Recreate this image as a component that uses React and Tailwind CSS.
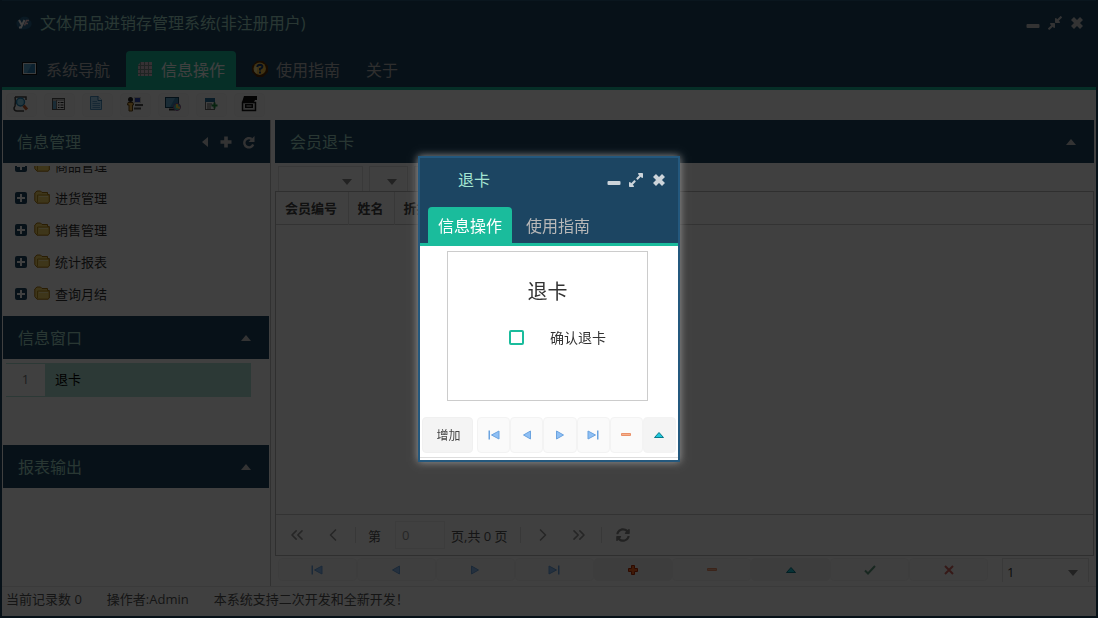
import React from "react";
import { ChevronLeft, ChevronRight, ChevronsLeft, ChevronsRight } from "lucide-react";
import { FaSyncAlt, FaExpandAlt, FaCompressAlt } from "react-icons/fa";

const CloseIcon = () => (
  <svg viewBox="0 0 12 12" className="size-3">
    <path d="M1.5 1.5 L10.5 10.500 M10.500 1.500 L1.500 10.500" stroke="currentColor" strokeWidth="4.2" />
  </svg>
);

const MinusIcon = () => (
  <svg viewBox="0 0 14 12" className="h-3 w-3.5">
    <rect x="0.5" y="7" width="13" height="4" rx="1" fill="currentColor" />
  </svg>
);

const PlusIcon = () => (
  <svg viewBox="0 0 12 12" className="size-3">
    <path d="M4.200 .5 H7.800 V4.200 H11.500 V7.800 H7.800 V11.500 H4.200 V7.800 H.5 V4.200 H4.200Z" fill="currentColor" />
  </svg>
);

const UpIcon = () => (
  <svg viewBox="0 0 10 6" className="h-1.5 w-2.5">
    <path d="M5 0 L10 6 H0Z" fill="currentColor" />
  </svg>
);

const DownIcon = () => (
  <svg viewBox="0 0 10 6" className="h-1.5 w-2.5">
    <path d="M0 0 H10 L5 6Z" fill="currentColor" />
  </svg>
);

const LeftIcon = () => (
  <svg viewBox="0 0 6 10" className="h-2.5 w-1.5">
    <path d="M6 0 V10 L0 5Z" fill="currentColor" />
  </svg>
);

const ReloadIcon = () => (
  <svg viewBox="0 0 14 14" className="size-3.5">
    <path d="M11.200 9.500 A4.600 4.600 0 1 1 9.600 4" fill="none" stroke="currentColor" strokeWidth="2.400" />
    <path d="M12.500 1 V7 H6.500Z" fill="currentColor" />
  </svg>
);

function NavGlyph({ kind }) {
  const edge = "#6ba3df";
  return (
    <svg viewBox="0 0 16 16" className="size-4">
      {kind === "first" && (
        <g>
          <path d="M13 4 V12 L5.5 8Z" fill="#8fc0f5" stroke={edge} />
          <rect x="2.5" y="3.5" width="1.500" height="9" fill={edge} />
        </g>
      )}
      {kind === "prev" && <path d="M11.5 4 V12 L4.5 8Z" fill="#8fc0f5" stroke={edge} />}
      {kind === "next" && <path d="M4.5 4 V12 L11.5 8Z" fill="#8fc0f5" stroke={edge} />}
      {kind === "last" && (
        <g>
          <path d="M3 4 V12 L10.5 8Z" fill="#8fc0f5" stroke={edge} />
          <rect x="12" y="3.5" width="1.500" height="9" fill={edge} />
        </g>
      )}
      {kind === "add" && <path d="M6.500 3.500 H9.500 V6.500 H12.500 V9.500 H9.500 V12.500 H6.500 V9.500 H3.500 V6.500 H6.500Z" fill="#ff6a1f" stroke="#b82a00" />}
      {kind === "remove" && <path d="M3.500 6.500 H12.500 V8.500 H3.500Z" fill="#f5b08c" stroke="#ea9068" />}
      {kind === "edit" && <path d="M8 5.500 L12.500 10.500 H3.500Z" fill="#1fc8dc" stroke="#087b8b" />}
      {kind === "ok" && <path d="M3 8.500 L6 11.500 L13 4" fill="none" stroke="#5f9c80" strokeWidth="2" />}
      {kind === "cancel" && <path d="M4 4 L12 12 M12 4 L4 12" stroke="#d3645c" strokeWidth="2" />}
    </svg>
  );
}

const Folder = () => (
  <svg viewBox="0 0 16 14" className="h-3.5 w-4">
    <path d="M.8 10.500 V3 L3 1 H6.500 L8 2.500 H13.500 V4.500 H15.300 V12 L14 13.200 H3Z" fill="#f8d768" stroke="#a8740c" />
    <path d="M3.500 12.500 V5 H15" fill="none" stroke="#b98f22" />
    <path d="M5 6.500 H14" stroke="#fff0a8" />
  </svg>
);

const Expander = () => (
  <svg viewBox="0 0 12 12" className="size-3">
    <rect width="12" height="12" rx="2" fill="#1c4562" />
    <path d="M6 2 V10 M2 6 H10" stroke="#fff" strokeWidth="2" />
  </svg>
);

const Logo = () => (
  <svg viewBox="0 0 16 14" className="h-3.5 w-4">
    <path d="M.5 8 Q0 4 4 3.500 Q5 0 9 .8 Q13 1 13.300 4 Q16 5 15.500 9 Q14 13 9 13.200 H5 Q1 12 .5 8Z" fill="#28658c" />
    <path d="M3 4 L5.500 8.500 M8.500 4 L5 11.500 H3" fill="none" stroke="#fff" strokeWidth="2" />
    <path d="M8.500 9.500 L10.500 4.500 H13 M9.500 7.500 H12" fill="none" stroke="#f2c7cc" strokeWidth="1.500" />
  </svg>
);

function TabIcon({ kind }) {
  return (
    <svg viewBox="0 0 16 16" className="size-4">
      {kind === "nav" && (
        <g>
          <rect x="0" y="1" width="15" height="13" fill="#111" />
          <rect x="1" y="2" width="13" height="11" fill="#eef6fa" />
          <rect x="2" y="3" width="11" height="9" fill="#2f83bd" />
          <path d="M2 3 H10 L5 12 H2Z" fill="#5aa6d3" />
        </g>
      )}
      {kind === "grid" && (
        <g>
          <path d="M4 1 H15 V15 H1 V4Z" fill="#d8c4cf" />
          <path d="M1 4.500 H15 M1 8.500 H15 M1 12.500 H15 M3.500 1 V15 M7.500 1 V15 M11.500 1 V15" stroke="#7d8f8b" />
        </g>
      )}
      {kind === "help" && (
        <g>
          <path d="M5 0 H11 L16 5 V11 L11 16 H5 L0 11 V5Z" fill="#5a2f06" />
          <circle cx="7.700" cy="7.700" r="6.200" fill="#ffcb4a" />
          <path d="M2 10 Q2 3 9 2 Q4 6 5 13Z" fill="#ffe999" />
          <path d="M5.200 6 Q5.500 3.800 8 3.800 Q10.800 4 10.300 6 Q10 7.300 8 8 V9.500" fill="none" stroke="#173c72" strokeWidth="2" />
          <rect x="7" y="10.500" width="2" height="2" fill="#173c72" />
        </g>
      )}
    </svg>
  );
}

function ToolIcon({ kind }) {
  return (
    <svg viewBox="0 0 16 16" className="size-4">
      {kind === "search" && (
        <g>
          <path d="M2 1 H13 V4 M2 1 Q3 5 2 10 L1 12 Q1 15 4 15 H11" fill="none" stroke="#444" strokeWidth="1.500" />
          <circle cx="7.500" cy="6" r="4" fill="#8fdcf7" stroke="#2383b7" strokeWidth="1.500" />
          <path d="M10.500 9.500 L14 13.500" stroke="#c65b2e" strokeWidth="3" />
        </g>
      )}
      {kind === "list" && (
        <g>
          <rect x="1.500" y="2.500" width="12" height="11" fill="#fff" stroke="#555" />
          <rect x="2" y="5" width="3" height="8" fill="#69b1d8" />
          <path d="M2 4 H14 M5.500 4 V13" stroke="#777" />
          <path d="M7 6.500 H8.500 M9.500 6.500 H12.500 M7 9 H8.500 M9.500 9 H12.500 M7 11.500 H8.500 M9.500 11.500 H12.500" stroke="#222" />
        </g>
      )}
      {kind === "doc" && (
        <g>
          <path d="M1.500 .5 H9 L12.500 4 V13.500 H1.500Z" fill="#a9dafa" stroke="#4c93c2" />
          <path d="M9 0 V4.500 H13" fill="#dff4ff" stroke="#2f78ab" />
          <path d="M3.500 5.500 H8 M3.500 7.500 H11 M3.500 9.500 H11 M3.500 11.500 H11" stroke="#5ba0cd" />
        </g>
      )}
      {kind === "user" && (
        <g>
          <rect x="7.500" y="1.500" width="6" height="5" fill="#3048b8" stroke="#ccc" />
          <path d="M8 9 H16 M7 12.500 H14" stroke="#555" strokeWidth="2" />
          <path d="M8 10.500 H16" stroke="#eee" />
          <circle cx="3.500" cy="3.500" r="2.500" fill="#222" />
          <path d="M1 6.500 H6 L6.500 9 H5.500 V15 H2 V9 H.5Z" fill="#f1b950" stroke="#5f4210" />
        </g>
      )}
      {kind === "screen" && (
        <g>
          <rect x=".5" y="1.500" width="13" height="10" fill="#3d88b5" stroke="#13405d" />
          <path d="M1 2 H10 L5 11 H1Z" fill="#66add3" />
          <path d="M4 13.500 H10" stroke="#333" strokeWidth="2" />
          <circle cx="12" cy="11" r="3.500" fill="#48c7b0" stroke="#8c488e" />
          <path d="M12 8 V11 L15 12" fill="none" stroke="#ffd647" strokeWidth="2" />
        </g>
      )}
      {kind === "insert" && (
        <g>
          <rect x="2.500" y="2.500" width="9" height="11" fill="#fff" stroke="#666" />
          <rect x="2" y="2" width="10" height="4" fill="#2b6f9d" />
          <path d="M4 8 H9 M4 10 H8 M4 12 H8" stroke="#555" />
          <path d="M11.500 6.500 V12.500 M8.500 9.500 H14.500" stroke="#1c8a3c" strokeWidth="2" />
        </g>
      )}
      {kind === "print" && (
        <g>
          <path d="M3 0 H16 V4 H14 L13 6 H1Z" fill="#111" />
          <path d="M1.500 6.500 H14.500 V14.500 H1.500Z" fill="#ddd" stroke="#111" strokeWidth="1.500" />
          <rect x="4" y="8" width="8" height="4" fill="#111" />
          <path d="M5.500 10 H10.500" stroke="#ddd" />
        </g>
      )}
    </svg>
  );
}

const toolbar = [
  ["search", "查询"],
  ["list", "列表"],
  ["doc", "文档"],
  ["user", "用户"],
  ["screen", "屏幕"],
  ["insert", "插入"],
  ["print", "打印"],
];

const treeItems = ["商品管理", "进货管理", "销售管理", "统计报表", "查询月结"];

const gridButtons = [
  ["first", "首条"],
  ["prev", "上一条"],
  ["next", "下一条"],
  ["last", "末条"],
  ["add", "新增"],
  ["remove", "删除"],
  ["edit", "编辑"],
  ["ok", "保存"],
  ["cancel", "取消"],
];

const dialogButtons = gridButtons.slice(0, 4).concat([gridButtons[5], gridButtons[6]]);

function Tab({ icon, active, children }) {
  return (
    <button
      className={
        "flex h-9 items-center gap-2 rounded-t text-base " +
        (icon ? "px-[11px] " : "px-2.5 ") +
        (active ? "bg-[#1abc9c] text-white" : "text-[#b8b8b8]")
      }
    >
      {icon && <TabIcon kind={icon} />}
      <span className="pt-0.5">{children}</span>
    </button>
  );
}

function PanelHeader({ title, children }) {
  return (
    <header className="flex h-[43px] shrink-0 items-center justify-between bg-[#1c4562] pr-[18px] pl-[15px] text-base text-[#a3dccb]">
      <h2>{title}</h2>
      <div className="flex items-center gap-3 text-[#ccc]">{children}</div>
    </header>
  );
}

function Combo({ label, value, className }) {
  return (
    <div className={"relative border-x border-t border-[#e2e2e2] " + className}>
      <select aria-label={label} className="h-full w-full appearance-none bg-transparent px-1 text-[13px] text-[#333] outline-none">
        <option>{value}</option>
      </select>
      <span className="pointer-events-none absolute right-2.5 bottom-1.5 text-[#888]">
        <DownIcon />
      </span>
    </div>
  );
}

const Separator = () => <span className="h-4 w-px bg-[#ddd]" />;

function Sidebar() {
  return (
    <aside className="flex w-[268px] shrink-0 flex-col border-r border-[#c4c4c4]">
      <header className="flex h-[43px] shrink-0 items-center justify-between bg-[#1c4562] px-3.5 text-base text-[#a3dccb]">
        <h2>信息管理</h2>
        <div className="flex items-center gap-2.5 text-[#ccc]">
          <button aria-label="收起" className="pr-0.5"><LeftIcon /></button>
          <button aria-label="添加"><PlusIcon /></button>
          <button aria-label="刷新"><ReloadIcon /></button>
        </div>
      </header>
      <div className="mt-[3px] flex h-[150px] shrink-0 flex-col justify-end overflow-hidden pb-1.5">
        <ul>
          {treeItems.map((name) => (
            <li key={name} className="flex h-8 items-center px-3 text-[13px] text-[#333]">
              <button aria-label={"展开" + name}><Expander /></button>
              <span className="mr-[5px] ml-[7px] pb-0.5"><Folder /></span>
              <span className="pt-0.5">{name}</span>
            </li>
          ))}
        </ul>
      </div>
      <div className="flex flex-1 flex-col pr-px">
        <PanelHeader title="信息窗口">
          <button aria-label="收起信息窗口"><UpIcon /></button>
        </PanelHeader>
        <div className="h-[86px] pt-1 pr-[18px] pl-[3px]">
          <table className="w-full text-left text-[13px]">
            <tbody>
              <tr className="h-[33px] border-y border-[#b0e3d6]">
                <td className="w-[39px] text-center text-[#777]">1</td>
                <td className="bg-[#b0e3d6] px-2.5 text-black">退卡</td>
              </tr>
            </tbody>
          </table>
        </div>
        <PanelHeader title="报表输出">
          <button aria-label="收起报表输出"><UpIcon /></button>
        </PanelHeader>
      </div>
    </aside>
  );
}

function MemberPanel() {
  return (
    <section className="flex min-w-0 flex-1 flex-col">
      <PanelHeader title="会员退卡">
        <button aria-label="收起会员退卡"><UpIcon /></button>
      </PanelHeader>
      <div className="flex h-7 gap-1.5 px-[3px] pt-[3px]">
        <Combo label="字段" value="" className="w-[85px]" />
        <Combo label="条件" value="" className="w-[39px]" />
        <Combo label="内容" value="" className="w-[85px]" />
      </div>
      <div className="flex flex-1 flex-col border border-[#bbb]">
        <table className="w-full text-left text-[13px] text-[#444]">
          <thead>
            <tr className="h-8 border-b border-[#ccc]">
              <th className="w-[72px] border-r border-[#ddd] pt-0.5 pl-[9px]">会员编号</th>
              <th className="w-[46px] border-r border-[#ddd] pt-0.5 pl-[9px]">姓名</th>
              <th className="pt-0.5 pl-[9px]">折扣</th>
            </tr>
          </thead>
        </table>
        <nav className="mt-auto flex h-[41px] items-center border-t border-[#ccc] px-[11px] text-[13px] text-[#555]">
          <button aria-label="第一页" className="text-[#999]"><ChevronsLeft className="size-5" strokeWidth={2} /></button>
          <button aria-label="上一页" className="mr-3 ml-4 text-[#999]"><ChevronLeft className="size-5" strokeWidth={2} /></button>
          <Separator />
          <label htmlFor="page" className="ml-3 pt-1">第</label>
          <input id="page" defaultValue="0" className="mr-1.5 ml-3.5 h-7 w-[50px] border border-[#eee] px-1.5 text-[#999]" />
          <span className="mr-3 pt-1">页,共 0 页</span>
          <Separator />
          <button aria-label="下一页" className="ml-3 text-[#999]"><ChevronRight className="size-5" strokeWidth={2} /></button>
          <button aria-label="最后一页" className="mr-3 ml-4 text-[#999]"><ChevronsRight className="size-5" strokeWidth={2} /></button>
          <Separator />
          <button aria-label="刷新数据" className="ml-3.5 text-[#888]"><FaSyncAlt className="size-3.5" /></button>
        </nav>
      </div>
      <div className="flex h-[30px] gap-3.5 pt-0.5 pr-[5px] pb-1 pl-[3px]">
        <div className="flex flex-1">
          {gridButtons.map(([kind, label]) => (
            <button
              key={kind}
              aria-label={label}
              className={
                "flex h-[23px] flex-1 items-center justify-center rounded border border-[#f4f4f4] " +
                (kind === "add" || kind === "edit" ? "bg-[#f4f4f4]" : "bg-[#fbfbfb]")
              }
            >
              <NavGlyph kind={kind} />
            </button>
          ))}
        </div>
        <Combo label="页码" value="1" className="w-[87px]" />
      </div>
    </section>
  );
}

function CardDialog() {
  return (
    <div
      role="dialog"
      aria-modal="true"
      aria-label="退卡"
      className="flex w-[262px] flex-col border-2 border-[#24587d] bg-white shadow-[0_0_8px_#999]"
    >
      <div className="bg-[#1c4562] px-2">
        <header className="flex h-11 items-center justify-between pr-[3px] pl-[30px] text-base text-[#a5e5d2]">
          <h2>退卡</h2>
          <div className="flex items-center gap-[7px] text-[#ccd4da]">
            <button aria-label="最小化"><MinusIcon /></button>
            <button aria-label="最大化"><FaExpandAlt className="size-4" /></button>
            <button aria-label="关闭" className="px-0.5"><CloseIcon /></button>
          </div>
        </header>
        <div className="mt-[5px] flex gap-1">
          <Tab active>信息操作</Tab>
          <Tab>使用指南</Tab>
        </div>
      </div>
      <div className="h-[3px] bg-[#1abc9c]" />
      <form className="mt-[5px] ml-[27px] h-[150px] w-[201px] border border-[#ccc] text-[#333]">
        <h3 className="pt-[26px] text-center text-xl/7">退卡</h3>
        <label className="mt-5 ml-[61px] flex items-center text-sm/5">
          <input type="checkbox" className="size-[15px] appearance-none rounded-xs border-2 border-[#1abc9c] bg-white" />
          <span className="ml-[26px] pt-0.5">确认退卡</span>
        </label>
      </form>
      <footer className="mt-4 flex gap-1 border-b border-[#ddd] px-0.5 pb-1">
        <button className="h-9 w-[51px] rounded border border-[#f0f0f0] bg-[#f4f4f4] pt-0.5 pl-0.5 text-xs text-[#444]">增加</button>
        <div className="flex flex-1">
          {dialogButtons.map(([kind, label]) => (
            <button
              key={kind}
              aria-label={label}
              className={
                "flex h-9 flex-1 items-center justify-center rounded border border-[#f3f3f3] " +
                (kind === "edit" ? "bg-[#f4f4f4]" : "bg-[#fafafa]")
              }
            >
              <NavGlyph kind={kind} />
            </button>
          ))}
        </div>
      </footer>
      <div className="h-0.5" />
    </div>
  );
}

export default function App() {
  return (
    <div className="flex min-h-screen flex-col border-x-2 border-b-2 border-[#1c4562] bg-white font-['Open_Sans','Noto_Sans_CJK_SC',sans-serif]">
      <div className="border-t border-[#28587a] bg-[#1c4562]">
        <header className="flex h-11 items-center justify-between pr-[13px] pl-3.5 text-base text-[#a3dccb]">
          <h1 className="flex items-center gap-2">
            <Logo />
            文体用品进销存管理系统(非注册用户)
          </h1>
          <div className="flex items-center gap-[7px] text-[#ccc]">
            <button aria-label="最小化窗口"><MinusIcon /></button>
            <button aria-label="还原窗口"><FaCompressAlt className="size-4" /></button>
            <button aria-label="关闭窗口" className="pl-px"><CloseIcon /></button>
          </div>
        </header>
        <div className="mt-1.5 flex gap-[5px] px-[9px]">
          <Tab icon="nav">系统导航</Tab>
          <Tab icon="grid" active>信息操作</Tab>
          <Tab icon="help">使用指南</Tab>
          <Tab>关于</Tab>
        </div>
      </div>
      <div className="h-[3px] bg-[#1abc9c]" />
      <div className="flex h-[30px] items-center gap-[7px] px-1">
        {toolbar.map(([kind, label]) => (
          <button key={kind} aria-label={label} className="flex h-6 w-[31px] items-center justify-start rounded border border-[#f6f6f6] bg-[#fcfcfc] pb-0.5 pl-1.5">
            <ToolIcon kind={kind} />
          </button>
        ))}
      </div>
      <main className="flex flex-1 gap-1 pr-0.5 pl-px">
        <Sidebar />
        <MemberPanel />
      </main>
      <footer className="flex h-[30px] items-center gap-[25px] border-t border-[#e5e5e5] px-1 pb-1 text-[13px] text-[#555]">
        <span>当前记录数 0</span>
        <span>操作者:Admin</span>
        <span>本系统支持二次开发和全新开发！</span>
      </footer>
      <div className="fixed inset-0 grid place-items-center bg-black/75">
        <CardDialog />
      </div>
    </div>
  );
}
